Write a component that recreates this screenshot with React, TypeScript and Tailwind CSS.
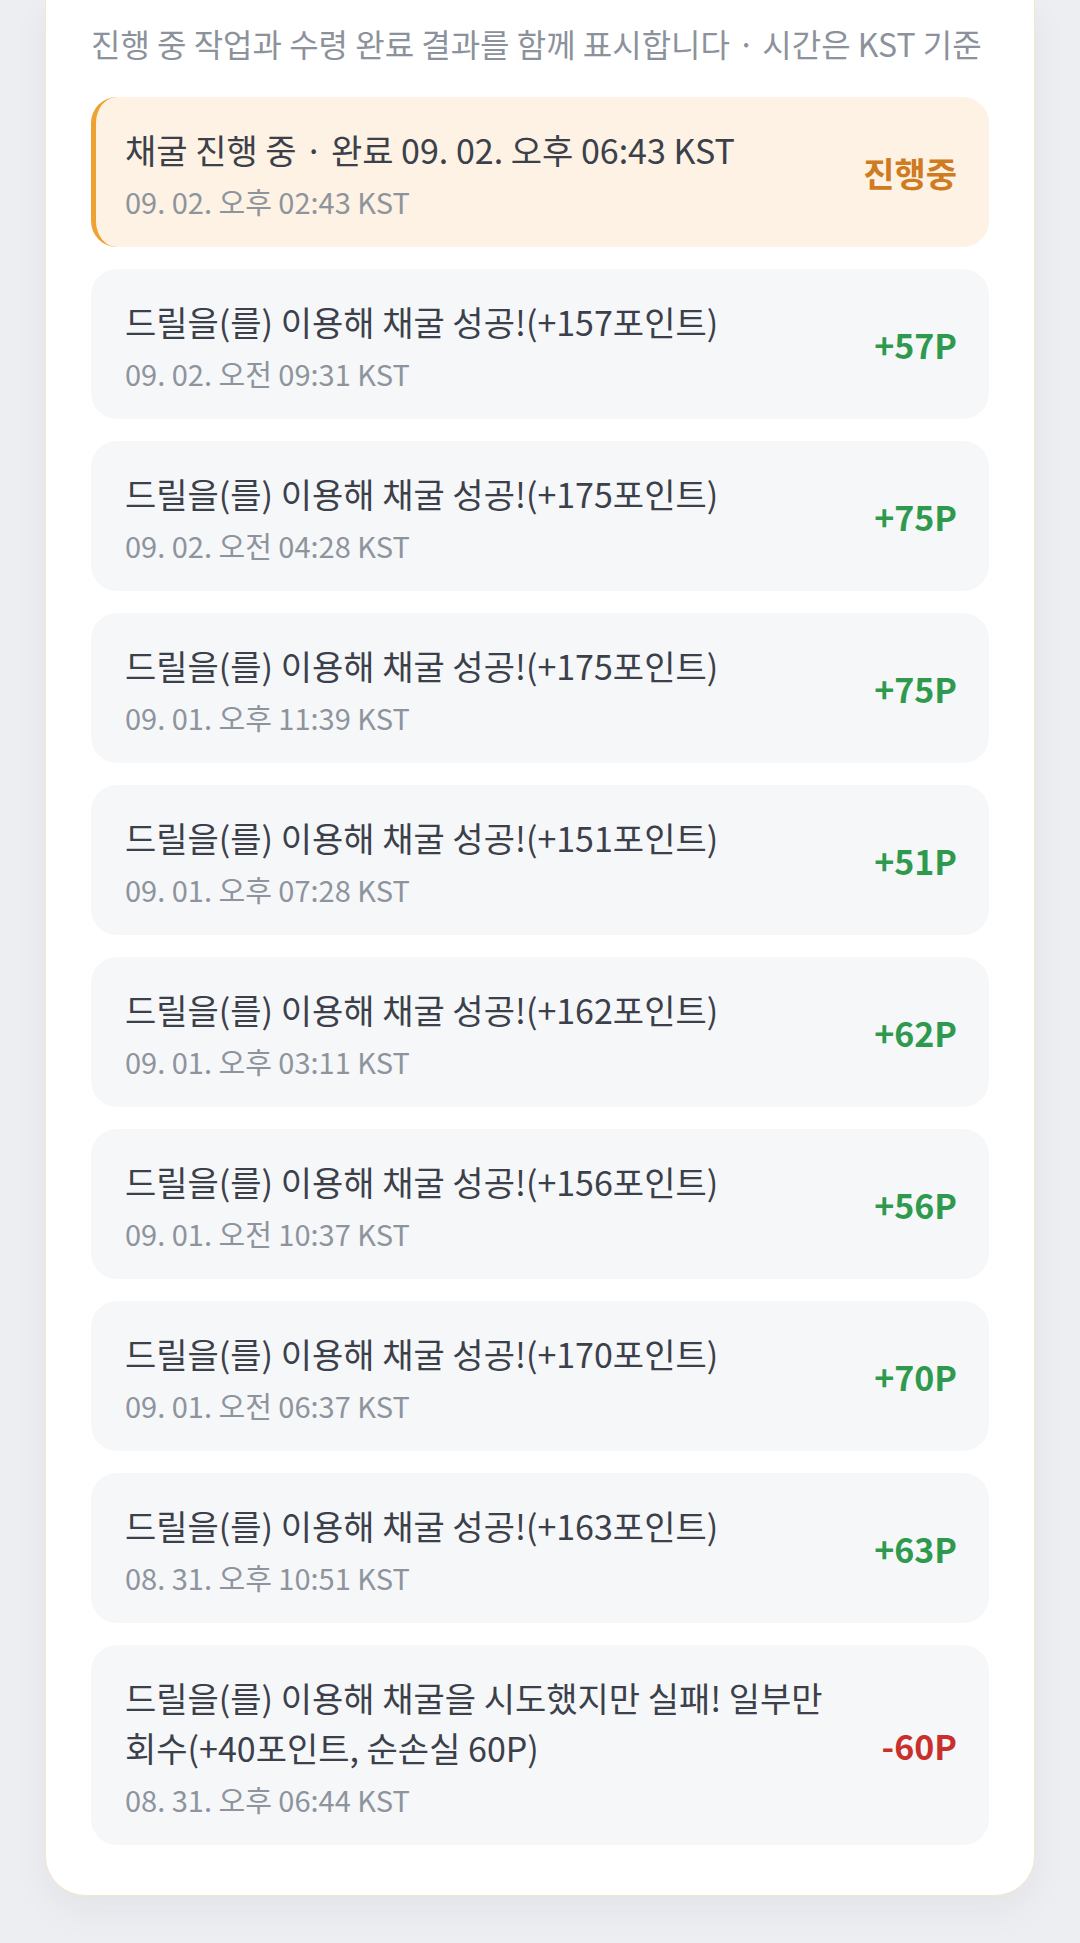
const items = [
  { title: "드릴을(를) 이용해 채굴 성공!(+157포인트)", date: "09. 02. 오전 09:31 KST", value: "+57P" },
  { title: "드릴을(를) 이용해 채굴 성공!(+175포인트)", date: "09. 02. 오전 04:28 KST", value: "+75P" },
  { title: "드릴을(를) 이용해 채굴 성공!(+175포인트)", date: "09. 01. 오후 11:39 KST", value: "+75P" },
  { title: "드릴을(를) 이용해 채굴 성공!(+151포인트)", date: "09. 01. 오후 07:28 KST", value: "+51P" },
  { title: "드릴을(를) 이용해 채굴 성공!(+162포인트)", date: "09. 01. 오후 03:11 KST", value: "+62P" },
  { title: "드릴을(를) 이용해 채굴 성공!(+156포인트)", date: "09. 01. 오전 10:37 KST", value: "+56P" },
  { title: "드릴을(를) 이용해 채굴 성공!(+170포인트)", date: "09. 01. 오전 06:37 KST", value: "+70P" },
  { title: "드릴을(를) 이용해 채굴 성공!(+163포인트)", date: "08. 31. 오후 10:51 KST", value: "+63P" },
  {
    title: "드릴을(를) 이용해 채굴을 시도했지만 실패! 일부만 회수(+40포인트, 순손실 60P)",
    date: "08. 31. 오후 06:44 KST",
    value: "-60P",
  },
];

export default function App() {
  return (
    <div
      className="min-h-screen bg-[#eceef2] px-[45px] pb-[45px]"
      style={{ fontFamily: '"Noto Sans CJK KR", "Noto Sans", sans-serif' }}
    >
      <div className="bg-white border border-t-0 border-[#f2e6cb] rounded-b-[40px] shadow-[0_14px_36px_rgba(30,40,60,0.05)] px-[45px] pt-[22px] pb-[50px]">
        <p className="text-[32px] leading-[42px] text-[#8c929b] mb-[33px] whitespace-nowrap">
          진행 중 작업과 수령 완료 결과를 함께 표시합니다 · 시간은 KST 기준
        </p>

        <div className="flex flex-col gap-[22px]">
          <div className="flex items-center justify-between rounded-[26px] bg-[#fdf2e3] border-l-[5px] border-[#eea234] pl-[29px] pr-[32px] py-7">
            <div className="flex flex-col">
              <span className="text-[34px] leading-[50px] text-[#3b404a]">
                채굴 진행 중 · 완료 09. 02. 오후 06:43 KST
              </span>
              <span className="text-[29px] leading-[36px] mt-2 text-[#8e949d]">
                09. 02. 오후 02:43 KST
              </span>
            </div>
            <span className="text-[34px] font-bold text-[#cf7b22]">진행중</span>
          </div>

          {items.map((item, i) => (
            <div
              key={i}
              className="flex items-center justify-between gap-6 rounded-[26px] bg-[#f6f7f9] pl-[34px] pr-[32px] py-7"
            >
              <div className="flex flex-col flex-1 min-w-0">
                <span className="text-[34px] leading-[50px] text-[#3b404a] break-keep">{item.title}</span>
                <span className="text-[29px] leading-[36px] mt-2 text-[#8e949d]">{item.date}</span>
              </div>
              <span
                className={
                  item.value.startsWith("-")
                    ? "text-[34px] font-bold text-[#c9302c] shrink-0"
                    : "text-[34px] font-bold text-[#2f9a4e] shrink-0"
                }
              >
                {item.value}
              </span>
            </div>
          ))}
        </div>
      </div>
    </div>
  );
}
